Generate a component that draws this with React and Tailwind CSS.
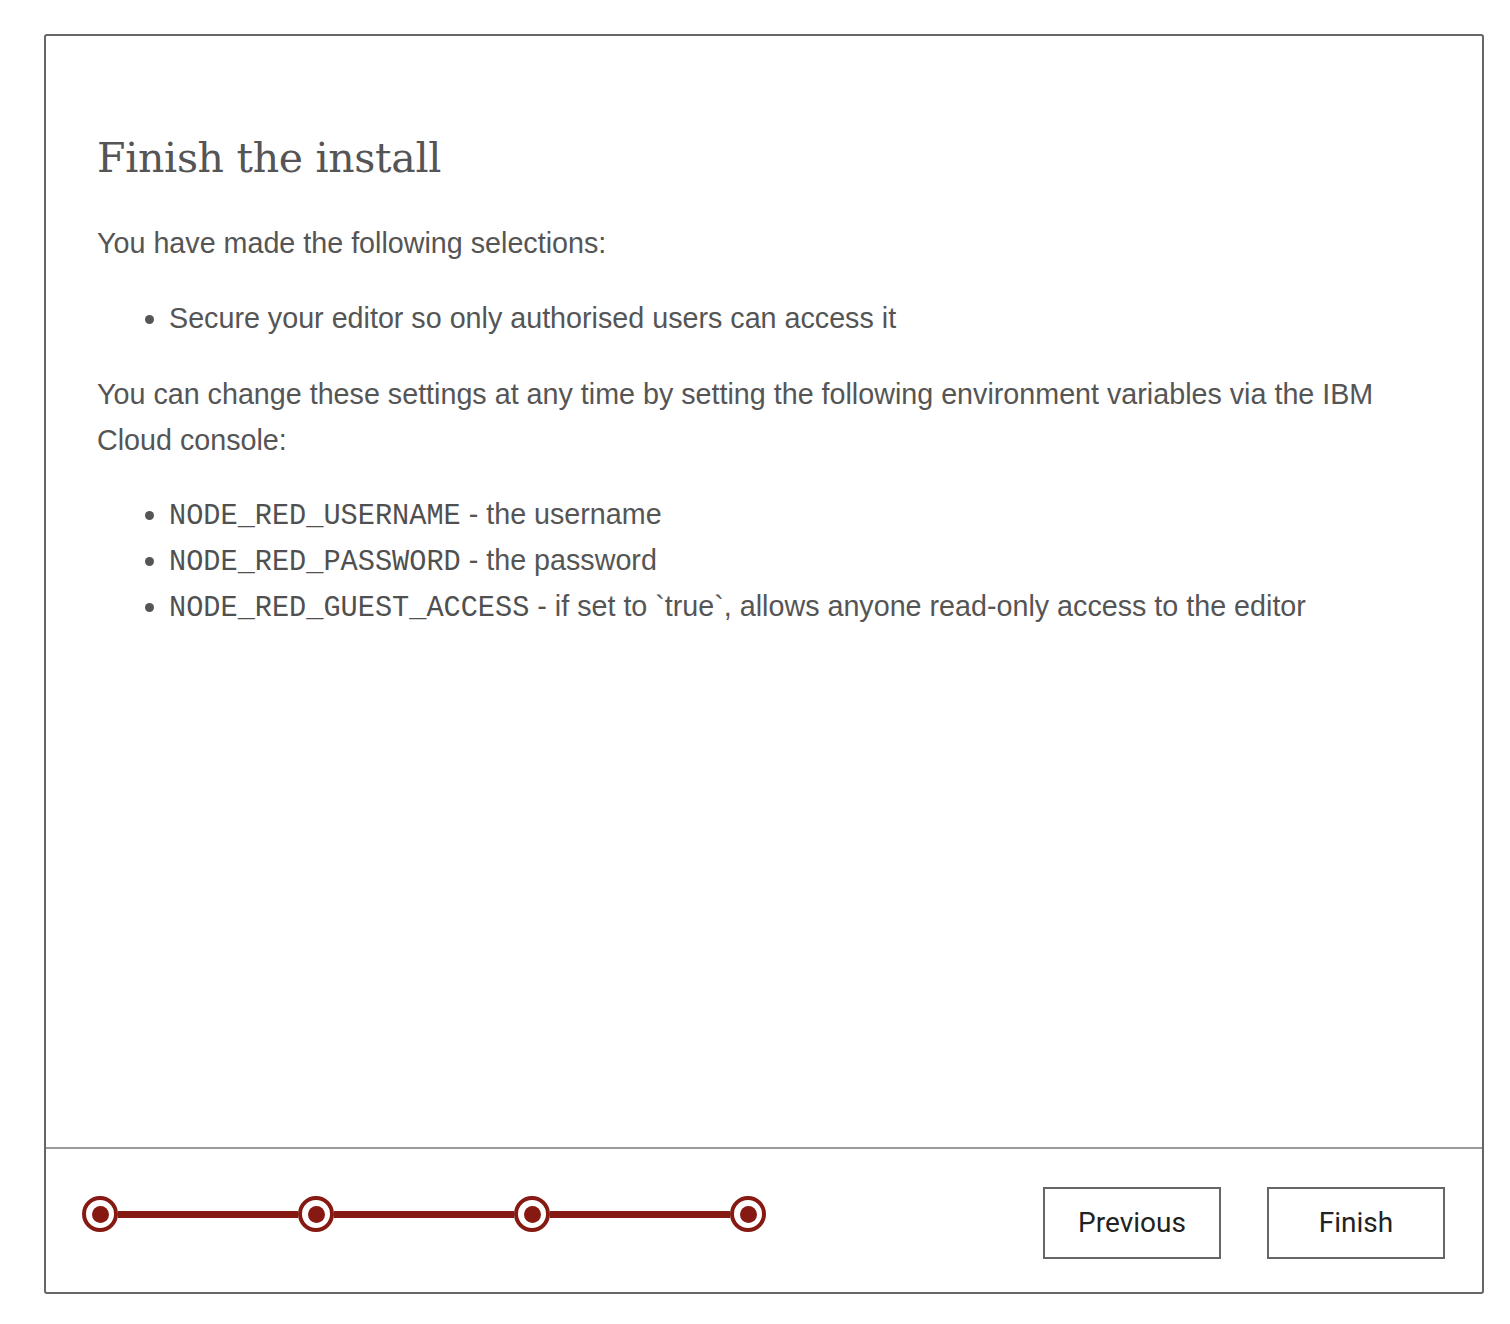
import React from "react";

const sans = { fontFamily: '"Liberation Sans", Arial, Helvetica, sans-serif' };
const mono = { fontFamily: '"Liberation Mono", "Courier New", monospace' };
const slab = { fontFamily: '"DejaVu Serif", "Roboto Slab", serif' };
const btn = { fontFamily: 'Roboto, "Noto Sans", Arial, sans-serif' };

function Step() {
  return (
    <div className="w-[36px] h-[36px] rounded-full border-[4px] border-[#861911] bg-white flex items-center justify-center shrink-0">
      <div className="w-[17px] h-[17px] rounded-full bg-[#861911]" />
    </div>
  );
}

function Line() {
  return <div className="w-[180px] h-[7px] bg-[#861911] shrink-0" />;
}

export default function App() {
  return (
    <div className="min-h-[1324px] bg-white pt-[34px] pl-[44px]">
      <div className="w-[1440px] h-[1260px] border-2 border-[#666666] rounded-[3px] flex flex-col">
        <div className="flex-1 pl-[51px] pr-[50px] pt-[98px] text-[#555555]" style={sans}>
          <h1 className="text-[41px] leading-[48px] font-normal tracking-[-0.3px] text-[#555555]" style={slab}>
            Finish the install
          </h1>
          <p className="mt-[38px] text-[28.7px] leading-[46px]">You have made the following selections:</p>
          <ul className="mt-[29px] list-disc pl-[72px] text-[28.7px] leading-[46px]">
            <li>Secure your editor so only authorised users can access it</li>
          </ul>
          <p className="mt-[30px] text-[28.7px] leading-[46px]">
            You can change these settings at any time by setting the following environment variables via the IBM Cloud console:
          </p>
          <ul className="mt-[28px] list-disc pl-[72px] text-[28.7px] leading-[46px]">
            <li>
              <code className="text-[28.6px] leading-none text-[#505050]" style={mono}>NODE_RED_USERNAME</code> - the username
            </li>
            <li>
              <code className="text-[28.6px] leading-none text-[#505050]" style={mono}>NODE_RED_PASSWORD</code> - the password
            </li>
            <li>
              <code className="text-[28.6px] leading-none text-[#505050]" style={mono}>NODE_RED_GUEST_ACCESS</code> - if set to `true`, allows anyone read-only access to the editor
            </li>
          </ul>
        </div>
        <div className="h-[145px] border-t-2 border-[#9a9a9a] flex justify-between items-start">
          <div className="ml-[36px] mt-[47px] flex items-center">
            <Step />
            <Line />
            <Step />
            <Line />
            <Step />
            <Line />
            <Step />
          </div>
          <div className="mt-[38px] mr-[37px] flex gap-[46px]" style={btn}>
            <button className="w-[178px] h-[72px] border-2 border-[#666666] bg-white text-[28px] text-[#222222]">
              Previous
            </button>
            <button className="w-[178px] h-[72px] border-2 border-[#666666] bg-white text-[28px] text-[#222222]">
              Finish
            </button>
          </div>
        </div>
      </div>
    </div>
  );
}
